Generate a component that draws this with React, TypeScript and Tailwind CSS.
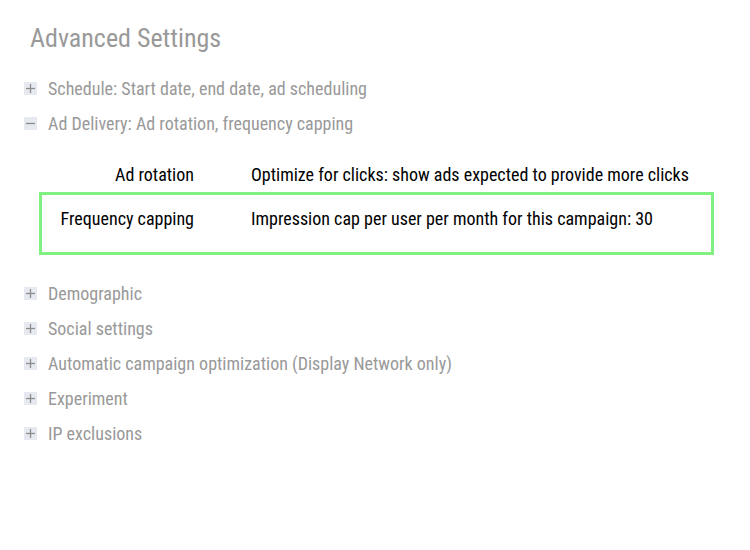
const before = ["Schedule: Start date, end date, ad scheduling"];
const after = [
  "Demographic",
  "Social settings",
  "Automatic campaign optimization (Display Network only)",
  "Experiment",
  "IP exclusions",
];

function Toggle({ open }: { open?: boolean }) {
  return (
    <svg width="13" height="13" viewBox="0 0 13 13" className="shrink-0">
      <rect width="13" height="13" fill="#e6e9ef" />
      <line x1="2" y1="6.5" x2="11" y2="6.5" stroke="#8c8c8c" strokeWidth="1.3" />
      {!open && <line x1="6.5" y1="2" x2="6.5" y2="11" stroke="#8c8c8c" strokeWidth="1.3" />}
    </svg>
  );
}

function Row({ label, open }: { label: string; open?: boolean }) {
  return (
    <div className="flex items-center h-[35px] gap-[11px]">
      <Toggle open={open} />
      <span className="text-[18px] text-[#999999]">{label}</span>
    </div>
  );
}

function App() {
  return (
    <div className="w-[750px] h-[550px] bg-white pt-[20px] font-['Roboto',sans-serif] font-stretch-condensed">
      <div className="pl-[30px] text-[26px] leading-[36px] text-[#999999]">Advanced Settings</div>
      <div className="pl-[24px] mt-[15px]">
        {before.map((l) => (
          <Row key={l} label={l} />
        ))}
        <Row label="Ad Delivery: Ad rotation, frequency capping" open />
      </div>
      <div className="mt-[17px] pl-[39px] pr-[36px]">
        <div className="flex items-center h-[32px] text-[18px] text-black whitespace-nowrap">
          <div className="w-[155px] text-right">Ad rotation</div>
          <div className="ml-[57px]">Optimize for clicks: show ads expected to provide more clicks</div>
        </div>
        <div className="mt-[2px] h-[63px] border-[3px] border-[#80f080] text-[18px] text-black pt-[12px] whitespace-nowrap">
          <div className="flex items-center h-[22px]">
            <div className="w-[152px] text-right">Frequency capping</div>
            <div className="ml-[57px]">Impression cap per user per month for this campaign: 30</div>
          </div>
        </div>
      </div>
      <div className="pl-[24px] mt-[21px]">
        {after.map((l) => (
          <Row key={l} label={l} />
        ))}
      </div>
    </div>
  );
}

export default App;
